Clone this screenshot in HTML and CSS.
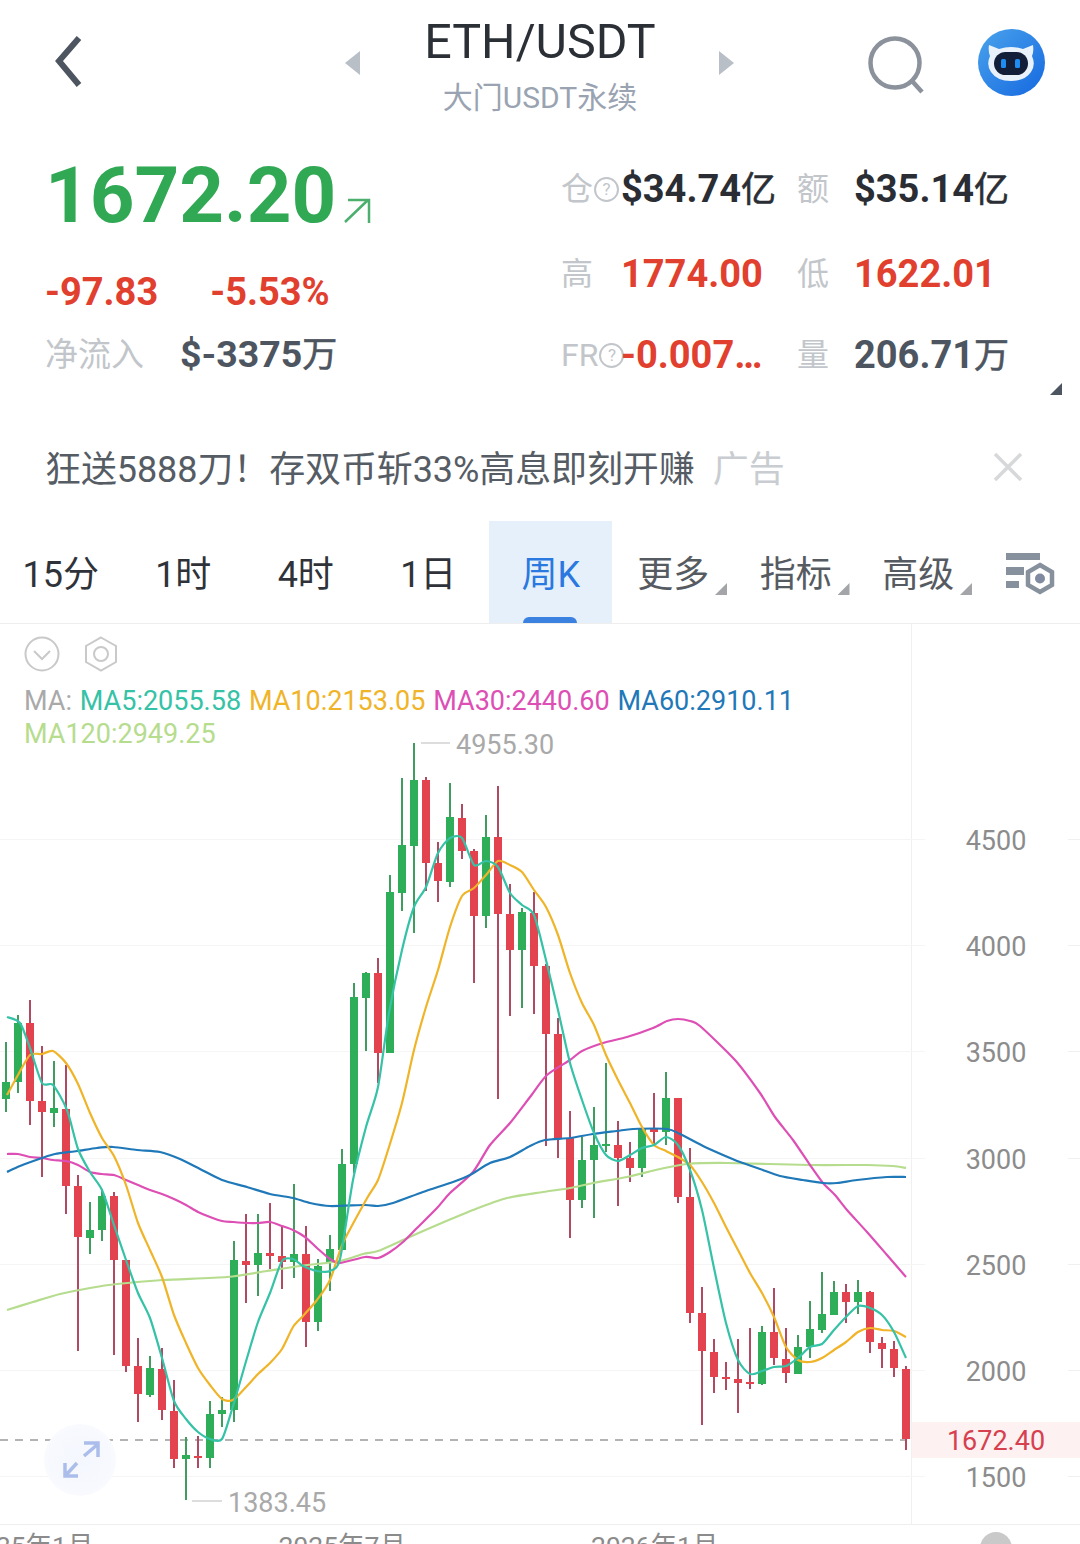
FILE: index.html
```html
<!DOCTYPE html>
<html lang="zh">
<head>
    <meta charset="UTF-8">
    <title>ETH/USDT</title>
    <link rel="stylesheet" href="styles.css">
</head>
<body>

<header class="topbar">
    <div class="topbar-left">
        <svg class="back" width="30" height="54" viewBox="0 0 30 54"><path d="M25 3 L5 26 L25 50" fill="none" stroke="#4d5560" stroke-width="6"/></svg>
        <span class="arrow arrow-left"></span>
    </div>
    <div class="title">
        <div class="title-main">ETH/USDT</div>
        <div class="title-sub">大门USDT永续</div>
    </div>
    <div class="topbar-right">
        <span class="arrow arrow-right"></span>
        <svg class="search" width="58" height="58" viewBox="0 0 58 58"><circle cx="27" cy="27" r="24.5" fill="none" stroke="#8b929c" stroke-width="4.5"/><path d="M44 45 L54 56" fill="none" stroke="#8b929c" stroke-width="4.5"/></svg>
        <svg class="avatar" width="67" height="67" viewBox="0 0 67 67">
            <defs>
                <linearGradient id="avatarBg" x1="0" y1="0" x2="1" y2="1">
                    <stop offset="0" stop-color="#4aa3ec"/>
                    <stop offset="1" stop-color="#1568e0"/>
                </linearGradient>
            </defs>
            <circle cx="33.5" cy="33.5" r="33.5" fill="url(#avatarBg)"/>
            <path d="M11 16 L21 20 Q33 16 45 20 L55 16 Q56 23 54 27 Q58 36 53 43 Q47 52 33 52 Q19 52 13 43 Q8 36 12 27 Q10 22 11 16 Z" fill="#e9f2fb"/>
            <rect x="16" y="23" width="34" height="23" rx="11.5" fill="#131f38"/>
            <rect x="23" y="30" width="5" height="9" rx="1.5" fill="#1e8cf0"/>
            <rect x="37" y="30" width="5" height="9" rx="1.5" fill="#1e8cf0"/>
        </svg>
    </div>
</header>

<section class="stats">
    <div class="stats-left">
        <div class="price-row">
            <span class="price">1672.20</span>
            <svg class="price-arrow" width="28" height="27" viewBox="0 0 28 27"><path d="M2 25 L25 3 M5 3 H26 V26" fill="none" stroke="#4caf6e" stroke-width="2.5"/></svg>
        </div>
        <div class="change-row">
            <span class="change red">-97.83</span>
            <span class="change red">-5.53%</span>
        </div>
        <div class="inflow-row">
            <span class="label inflow-label">净流入</span>
            <span class="value inflow-value slate">$-3375<span class="unit">万</span></span>
        </div>
    </div>
    <div class="stats-right">
        <div class="label">仓<span class="help">?</span></div>
        <div class="value dark">$34.74<span class="unit">亿</span></div>
        <div class="label">额</div>
        <div class="value dark">$35.14<span class="unit">亿</span></div>

        <div class="label">高</div>
        <div class="value red">1774.00</div>
        <div class="label">低</div>
        <div class="value red">1622.01</div>

        <div class="label fr">FR<span class="help">?</span></div>
        <div class="value red">-0.007…</div>
        <div class="label">量</div>
        <div class="value slate">206.71<span class="unit">万</span></div>
    </div>
    <span class="corner"></span>
</section>

<section class="ad">
    <span class="ad-text">狂送5888刀！存双币斩33%高息即刻开赚</span>
    <span class="ad-tag">广告</span>
    <svg class="ad-close" width="30" height="30" viewBox="0 0 30 30"><path d="M2 2 L28 28 M28 2 L2 28" stroke="#d6d8da" stroke-width="3.5"/></svg>
</section>

<nav class="tabs">
    <div class="tab">15分</div>
    <div class="tab">1时</div>
    <div class="tab">4时</div>
    <div class="tab">1日</div>
    <div class="tab active">周K</div>
    <div class="tab menu">更多</div>
    <div class="tab menu">指标</div>
    <div class="tab menu">高级</div>
    <svg class="tab-settings" width="50" height="42" viewBox="0 0 50 42">
        <path d="M0 0 H34 V7 H0 Z M0 14 H18 V22 H0 Z M0 28 H13 V35 H0 Z" fill="#87919d"/>
        <path d="M34 12 L46 19 V32 L34 39 L22 32 V19 Z" fill="#fff" stroke="#87919d" stroke-width="4.5"/>
        <circle cx="34" cy="25.5" r="5" fill="#808aa0"/>
    </svg>
</nav>

<main class="chart">
    <svg id="plot" class="plot" viewBox="0 624 1080 901" width="1080" height="901"></svg>
    <div class="chart-tools">
        <svg width="36" height="36" viewBox="0 0 36 36"><circle cx="18" cy="18" r="16.5" fill="none" stroke="#c9c9c9" stroke-width="2"/><path d="M10 15 L18 23 L26 15" fill="none" stroke="#c9c9c9" stroke-width="2"/></svg>
        <svg width="36" height="36" viewBox="0 0 36 36"><path d="M18 1.5 L33 10 V26 L18 34.5 L3 26 V10 Z" fill="none" stroke="#c9c9c9" stroke-width="2"/><circle cx="18" cy="18" r="7" fill="none" stroke="#c9c9c9" stroke-width="2"/></svg>
    </div>
    <div class="legend">
        <span class="ma-label">MA:</span>
        <span class="ma5">MA5:2055.58</span>
        <span class="ma10">MA10:2153.05</span>
        <span class="ma30">MA30:2440.60</span>
        <span class="ma60">MA60:2910.11</span>
        <span class="ma120">MA120:2949.25</span>
    </div>
    <div class="expand">
        <svg width="40" height="40" viewBox="0 0 40 40"><path d="M24 3 H38 V17 M38 4 L24 16 M5 23 V36 H18 M5 36 L17 23" fill="none" stroke="#abbdea" stroke-width="3.5"/></svg>
    </div>
</main>

<footer class="dates">
    <span>2025年1月</span>
    <span>2025年7月</span>
    <span>2026年1月</span>
    <i class="dates-dot"></i>
</footer>

<script src="chart.js"></script>
</body>
</html>
```

FILE: styles.css
```css
* {
    box-sizing: border-box;
}

body {
    margin: 0;
    width: 1080px;
    height: 1544px;
    overflow: hidden;
    background-color: #fff;
    font-family: Roboto, "Noto Sans CJK SC", sans-serif;
}

.red {
    color: #e1402f;
}

.dark {
    color: #2a2e34;
}

.slate {
    color: #4d5560;
}

/* top bar */
.topbar {
    display: grid;
    grid-template-columns: minmax(0, 1fr) auto minmax(0, 1fr);
    height: 124px;
}

.topbar-left,
.topbar-right {
    display: flex;
    align-items: center;
    height: 124px;
}

.topbar-left {
    justify-content: space-between;
    padding: 0 64px 0 54px;
}

.topbar-right {
    padding-left: 63px;
}

.arrow {
    flex: none;
    width: 0;
    height: 0;
    border-top: 12px solid transparent;
    border-bottom: 12px solid transparent;
    margin-top: 2px;
}

.arrow-left {
    border-right: 15px solid #b9bfc7;
}

.arrow-right {
    border-left: 15px solid #b9bfc7;
}

.search {
    flex: none;
    margin-left: 134px;
    margin-top: 6px;
}

.avatar {
    flex: none;
    margin-left: 52px;
}

.title {
    text-align: center;
    padding-top: 14px;
}

.title-main {
    font-size: 48.4px;
    line-height: 56px;
    color: #2b2f36;
}

.title-sub {
    font-size: 30px;
    line-height: 44px;
    margin-top: 6px;
    color: #9aa3b1;
}

/* stats */
.stats {
    position: relative;
    display: flex;
    height: 292px;
}

.stats-left {
    width: 561px;
    padding: 26px 0 0 45px;
}

.price-row {
    display: flex;
    align-items: flex-end;
    height: 92px;
}

.price {
    font-size: 78px;
    line-height: 92px;
    font-weight: 700;
    color: #31a853;
}

.price-arrow {
    margin: 0 0 18px 7px;
}

.change-row {
    display: flex;
    gap: 52px;
    height: 48px;
    margin-top: 26px;
}

.change {
    font-size: 38px;
    line-height: 48px;
    font-weight: 700;
}

.inflow-row {
    display: flex;
    align-items: center;
    gap: 36px;
    height: 48px;
    margin-top: 15px;
}

.label {
    font-size: 32px;
    line-height: 48px;
    color: #c2c6ca;
    white-space: nowrap;
}

.inflow-label {
    font-size: 33px;
}

.value {
    font-size: 38px;
    line-height: 48px;
    font-weight: 700;
    white-space: nowrap;
}

.inflow-value {
    font-size: 37.5px;
}

.unit {
    font-size: 35px;
    font-weight: 400;
    -webkit-text-stroke: 0.6px currentColor;
}

.stats-right {
    display: grid;
    grid-template-columns: 60px 176px 57px auto;
    grid-template-rows: 85px 81px 48px;
    padding-top: 41px;
}

.help {
    display: inline-block;
    width: 25px;
    height: 25px;
    margin-left: 1px;
    border: 2px solid #c2c6ca;
    border-radius: 50%;
    font-size: 17px;
    line-height: 21px;
    text-align: center;
    vertical-align: 5px;
}

.fr {
    margin-right: -4px;
}

.corner {
    position: absolute;
    right: 18px;
    bottom: 21px;
    width: 12px;
    height: 12px;
    background-color: #4d5560;
    clip-path: polygon(100% 0, 100% 100%, 0 100%);
}

/* ad banner */
.ad {
    display: flex;
    align-items: center;
    height: 105px;
    padding: 0 0 5px 45px;
    font-size: 36px;
}

.ad-text {
    letter-spacing: -0.1px;
    color: #565c64;
}

.ad-tag {
    margin-left: 18px;
    color: #c9cdd1;
}

.ad-close {
    margin: 2px 0 0 208px;
}

/* period tabs */
.tabs {
    display: flex;
    height: 103px;
    margin-left: -1px;
    border-bottom: 1px solid #eeeeee;
}

.tab {
    position: relative;
    width: 122.5px;
    flex: none;
    padding: 30px 0 0 1px;
    font-size: 36px;
    line-height: 48px;
    text-align: center;
    color: #2f3339;
}

.tab.active {
    background-color: #e6f0fb;
    color: #2a79e0;
}

.tab.active::after {
    content: "";
    position: absolute;
    left: 34px;
    bottom: 0;
    width: 54px;
    height: 6px;
    border-radius: 6px 6px 0 0;
    background-color: #3b82e0;
}

.tab.menu {
    color: #565b62;
}

.tab.menu::after {
    content: "";
    position: absolute;
    right: 7px;
    bottom: 28px;
    width: 12px;
    height: 12px;
    background-color: #a3a5a8;
    clip-path: polygon(100% 0, 100% 100%, 0 100%);
}

.tab-settings {
    flex: none;
    margin: 32px 0 0 27px;
}

/* chart */
.chart {
    position: relative;
    height: 901px;
    border-bottom: 1px solid #eeeeee;
}

.plot {
    position: absolute;
    top: 0;
    left: 0;
}

.plot text {
    font-family: Roboto, sans-serif;
    font-size: 27px;
}

.chart-tools {
    position: relative;
    display: flex;
    gap: 23px;
    padding: 12px 0 0 24px;
}

.legend {
    position: relative;
    width: 810px;
    padding: 13px 0 0 24px;
    font-size: 27px;
    line-height: 33px;
    word-spacing: 1.1px;
}

.ma-label {
    color: #a9a9a9;
}

.ma5 {
    color: #35c2a6;
}

.ma10 {
    color: #f0b429;
}

.ma30 {
    color: #dd4fb4;
}

.ma60 {
    color: #1f78b8;
}

.ma120 {
    color: #b6dc8e;
}

.expand {
    position: absolute;
    left: 44px;
    top: 800px;
    display: flex;
    align-items: center;
    justify-content: center;
    width: 72px;
    height: 72px;
    border-radius: 50%;
    background: radial-gradient(circle, #f4f7fe 0%, #f7f9fe 60%, #ffffff 100%);
}

/* x axis */
.dates {
    position: relative;
    display: flex;
    gap: 185px;
    margin-left: -34px;
    padding-top: 5px;
    font-size: 26.5px;
    line-height: 32px;
    color: #8b8b8b;
}

.dates-dot {
    position: absolute;
    left: 1014px;
    top: 7px;
    width: 32px;
    height: 32px;
    border-radius: 50%;
    background-color: #c9c9c9;
}
```

FILE: chart.js
```js
// weekly candles: [color, wick top, wick bottom, body top, body bottom]
// y values are page pixels, one candle every 12px starting at x=6
const candles = [
    ['g',1042,1112,1082,1099], ['g',1015,1093,1023,1082], ['r',1000,1125,1023,1101], ['r',1046,1177,1101,1112],
    ['g',1061,1127,1108,1113], ['r',1065,1214,1109,1186], ['r',1175,1351,1186,1237], ['g',1202,1254,1230,1238],
    ['g',1189,1241,1196,1230], ['r',1192,1355,1196,1260], ['r',1260,1372,1260,1366], ['r',1338,1422,1366,1394],
    ['g',1356,1397,1368,1395], ['r',1348,1420,1369,1410], ['r',1380,1468,1411,1459], ['g',1437,1500,1455,1459],
    ['r',1436,1468,1456,1458], ['g',1401,1468,1414,1458], ['g',1397,1427,1410,1414], ['g',1241,1422,1260,1410],
    ['r',1214,1303,1261,1265], ['g',1214,1296,1253,1265], ['r',1203,1269,1253,1256], ['r',1226,1289,1256,1262],
    ['g',1184,1278,1254,1262], ['r',1226,1347,1254,1322], ['g',1259,1331,1266,1322], ['g',1235,1291,1249,1262],
    ['g',1149,1250,1164,1250], ['g',983,1173,997,1164], ['g',972,1051,973,998], ['r',958,1083,973,1053],
    ['g',875,1053,892,1053], ['g',778,911,845,893], ['g',743,933,780,846], ['r',777,891,780,863],
    ['r',842,902,863,881], ['g',783,887,817,882], ['r',804,859,818,851], ['r',849,983,851,916],
    ['g',815,928,837,916], ['r',786,1099,837,914], ['r',884,1016,914,950], ['g',908,1008,912,950],
    ['r',892,1014,913,966], ['r',964,1146,966,1034], ['r',1018,1158,1034,1138], ['r',1111,1238,1138,1200],
    ['g',1137,1208,1160,1200], ['g',1107,1218,1145,1160], ['g',1063,1152,1144,1146], ['r',1121,1206,1145,1158],
    ['r',1142,1182,1158,1168], ['g',1127,1177,1128,1168], ['r',1093,1145,1128,1132], ['g',1072,1145,1098,1132],
    ['r',1098,1203,1098,1197], ['r',1148,1323,1197,1313], ['r',1287,1425,1313,1351], ['r',1339,1393,1352,1377],
    ['r',1362,1390,1377,1379], ['r',1339,1413,1379,1383], ['r',1328,1389,1382,1384], ['g',1326,1385,1332,1384],
    ['r',1288,1365,1332,1358], ['r',1328,1383,1359,1373], ['g',1335,1374,1347,1374], ['g',1301,1358,1329,1347],
    ['g',1272,1333,1314,1330], ['g',1281,1315,1292,1315], ['r',1284,1323,1292,1302], ['g',1280,1314,1292,1302],
    ['r',1291,1353,1292,1342], ['r',1337,1368,1343,1349], ['r',1341,1377,1349,1368], ['r',1366,1450,1369,1439]
];

const lines = [
    { color: '#b6dc8e', points: '7,1310 33,1302 60,1294 90,1288 117,1284 163,1280 227,1277 267,1271 300,1266 340,1261 363,1254 378,1251 403,1240 437,1225 473,1210 507,1198 543,1192 570,1188 593,1183 627,1177 660,1169 687,1164 727,1163 810,1165 867,1165 893,1166 906,1168' },
    { color: '#dd4fb4', points: '7,1154 18,1154 30,1157 42,1158 53,1160 66,1161 78,1165 90,1172 102,1174 114,1175 126,1180 138,1185 150,1190 162,1194 174,1199 186,1205 198,1212 210,1217 222,1221 233,1222 247,1223 258,1223 270,1222 282,1226 293,1230 305,1237 317,1248 330,1259 340,1263 365,1257 378,1258 390,1252 403,1242 417,1228 437,1208 450,1193 473,1172 490,1145 510,1123 530,1097 547,1075 570,1060 582,1051 603,1043 627,1037 653,1028 667,1021 678,1019 690,1021 700,1026 735,1060 760,1093 775,1117 793,1140 810,1165 823,1183 835,1195 847,1210 867,1232 887,1255 906,1277' },
    { color: '#1f78b8', points: '7,1172 20,1166 42,1158 55,1154 77,1151 97,1148 113,1147 137,1150 160,1152 180,1159 200,1169 222,1180 247,1187 270,1194 293,1198 310,1203 330,1206 365,1205 378,1206 393,1203 423,1192 453,1182 470,1175 490,1163 510,1157 530,1146 545,1140 570,1138 593,1134 617,1131 633,1129 667,1129 680,1134 703,1146 723,1155 740,1162 760,1169 780,1176 803,1180 823,1183 837,1183 857,1180 887,1177 906,1177' },
    { color: '#f0b429', points: '7,1095 18,1075 30,1055 42,1054 53,1051 66,1063 78,1084 90,1113 102,1138 114,1156 126,1185 138,1223 150,1250 162,1277 174,1315 186,1343 198,1368 210,1385 222,1399 233,1400 247,1386 258,1374 270,1363 282,1349 293,1327 303,1316 317,1300 330,1280 343,1243 366,1200 378,1180 389,1147 402,1103 414,1050 426,1007 438,970 450,927 462,896 474,888 486,875 498,861 510,865 522,872 534,890 546,907 558,935 570,973 582,1003 594,1025 606,1055 618,1080 630,1103 642,1127 654,1145 666,1151 678,1157 690,1165 702,1182 714,1203 726,1227 738,1250 750,1273 762,1293 774,1317 786,1347 798,1360 810,1362 822,1358 834,1350 846,1342 858,1332 870,1328 882,1330 894,1331 906,1337' },
    { color: '#35c2a6', points: '7,1017 20,1023 30,1048 42,1083 53,1085 67,1110 78,1149 90,1172 102,1190 114,1225 126,1260 138,1293 150,1318 162,1358 174,1401 186,1419 198,1432 210,1439 222,1439 233,1406 247,1358 258,1322 270,1293 282,1261 293,1259 303,1266 317,1271 330,1271 340,1259 353,1180 366,1127 378,1087 389,1013 402,950 414,907 426,887 438,853 450,838 462,838 474,865 486,861 498,867 510,893 522,905 534,915 546,960 558,1010 570,1063 582,1100 594,1133 606,1155 618,1161 630,1155 642,1148 654,1145 666,1137 678,1145 690,1170 702,1210 714,1268 726,1323 738,1360 750,1374 762,1371 774,1367 786,1366 798,1358 810,1347 822,1344 834,1330 846,1317 858,1306 870,1308 882,1315 894,1332 906,1358' }
];

const gridLevels = [[839, '4500'], [945, '4000'], [1051, '3500'], [1158, '3000'], [1264, '2500'], [1370, '2000'], [1476, '1500']];

const plot = document.getElementById('plot');

function add(tag, attrs, text) {
    const el = document.createElementNS('http://www.w3.org/2000/svg', tag);
    for (const key in attrs) {
        el.setAttribute(key, attrs[key]);
    }
    if (text) {
        el.textContent = text;
    }
    plot.appendChild(el);
    return el;
}

// turn "x,y x,y ..." into a smooth path (catmull-rom to bezier)
function smoothPath(points) {
    const p = points.split(' ').map(pair => pair.split(',').map(Number));
    let d = 'M' + p[0].join(' ');
    for (let i = 0; i < p.length - 1; i++) {
        const a = p[i - 1] || p[i];
        const b = p[i];
        const c = p[i + 1];
        const e = p[i + 2] || c;
        const c1 = [b[0] + (c[0] - a[0]) / 8, b[1] + (c[1] - a[1]) / 8];
        const c2 = [c[0] - (e[0] - b[0]) / 8, c[1] - (e[1] - b[1]) / 8];
        d += ' C' + c1.join(' ') + ' ' + c2.join(' ') + ' ' + c.join(' ');
    }
    return d;
}

// price axis column
add('line', { x1: 911.5, y1: 624, x2: 911.5, y2: 1525, stroke: '#f0f0f0', 'stroke-width': 1 });
add('rect', { x: 912, y: 1422, width: 168, height: 36, fill: '#fdf2f1' });

gridLevels.forEach(([y, label]) => {
    add('line', { x1: 0, y1: y + 0.5, x2: 925, y2: y + 0.5, stroke: '#f5f5f5', 'stroke-width': 1 });
    add('line', { x1: 1068, y1: y + 0.5, x2: 1080, y2: y + 0.5, stroke: '#f0f0f0', 'stroke-width': 1 });
    add('text', { x: 996, y: y + 11, 'text-anchor': 'middle', fill: '#8c8c8c' }, label);
});

add('line', { x1: 0, y1: 1440, x2: 905, y2: 1440, stroke: '#b3b3b3', 'stroke-width': 2, 'stroke-dasharray': '8 7' });

candles.forEach(([color, wickTop, wickBottom, bodyTop, bodyBottom], i) => {
    const x = 6 + i * 12;
    add('rect', { x: x - 1, y: wickTop, width: 2, height: wickBottom - wickTop, fill: color === 'g' ? '#3f9e5f' : '#b04a62' });
    add('rect', { x: x - 4, y: bodyTop, width: 8, height: bodyBottom - bodyTop, fill: color === 'g' ? '#2fae5a' : '#e3434f' });
});

lines.forEach(line => {
    add('path', { d: smoothPath(line.points), fill: 'none', stroke: line.color, 'stroke-width': 2.2, 'stroke-linejoin': 'round' });
});

// high and low markers
add('line', { x1: 421, y1: 743, x2: 450, y2: 743, stroke: '#d2d2d2', 'stroke-width': 1.5 });
add('text', { x: 456, y: 754, fill: '#a9a9a9' }, '4955.30');
add('line', { x1: 192, y1: 1501, x2: 222, y2: 1501, stroke: '#d2d2d2', 'stroke-width': 1.5 });
add('text', { x: 228, y: 1512, fill: '#a9a9a9' }, '1383.45');

add('text', { x: 996, y: 1450, 'text-anchor': 'middle', fill: '#d6404f' }, '1672.40');
```
